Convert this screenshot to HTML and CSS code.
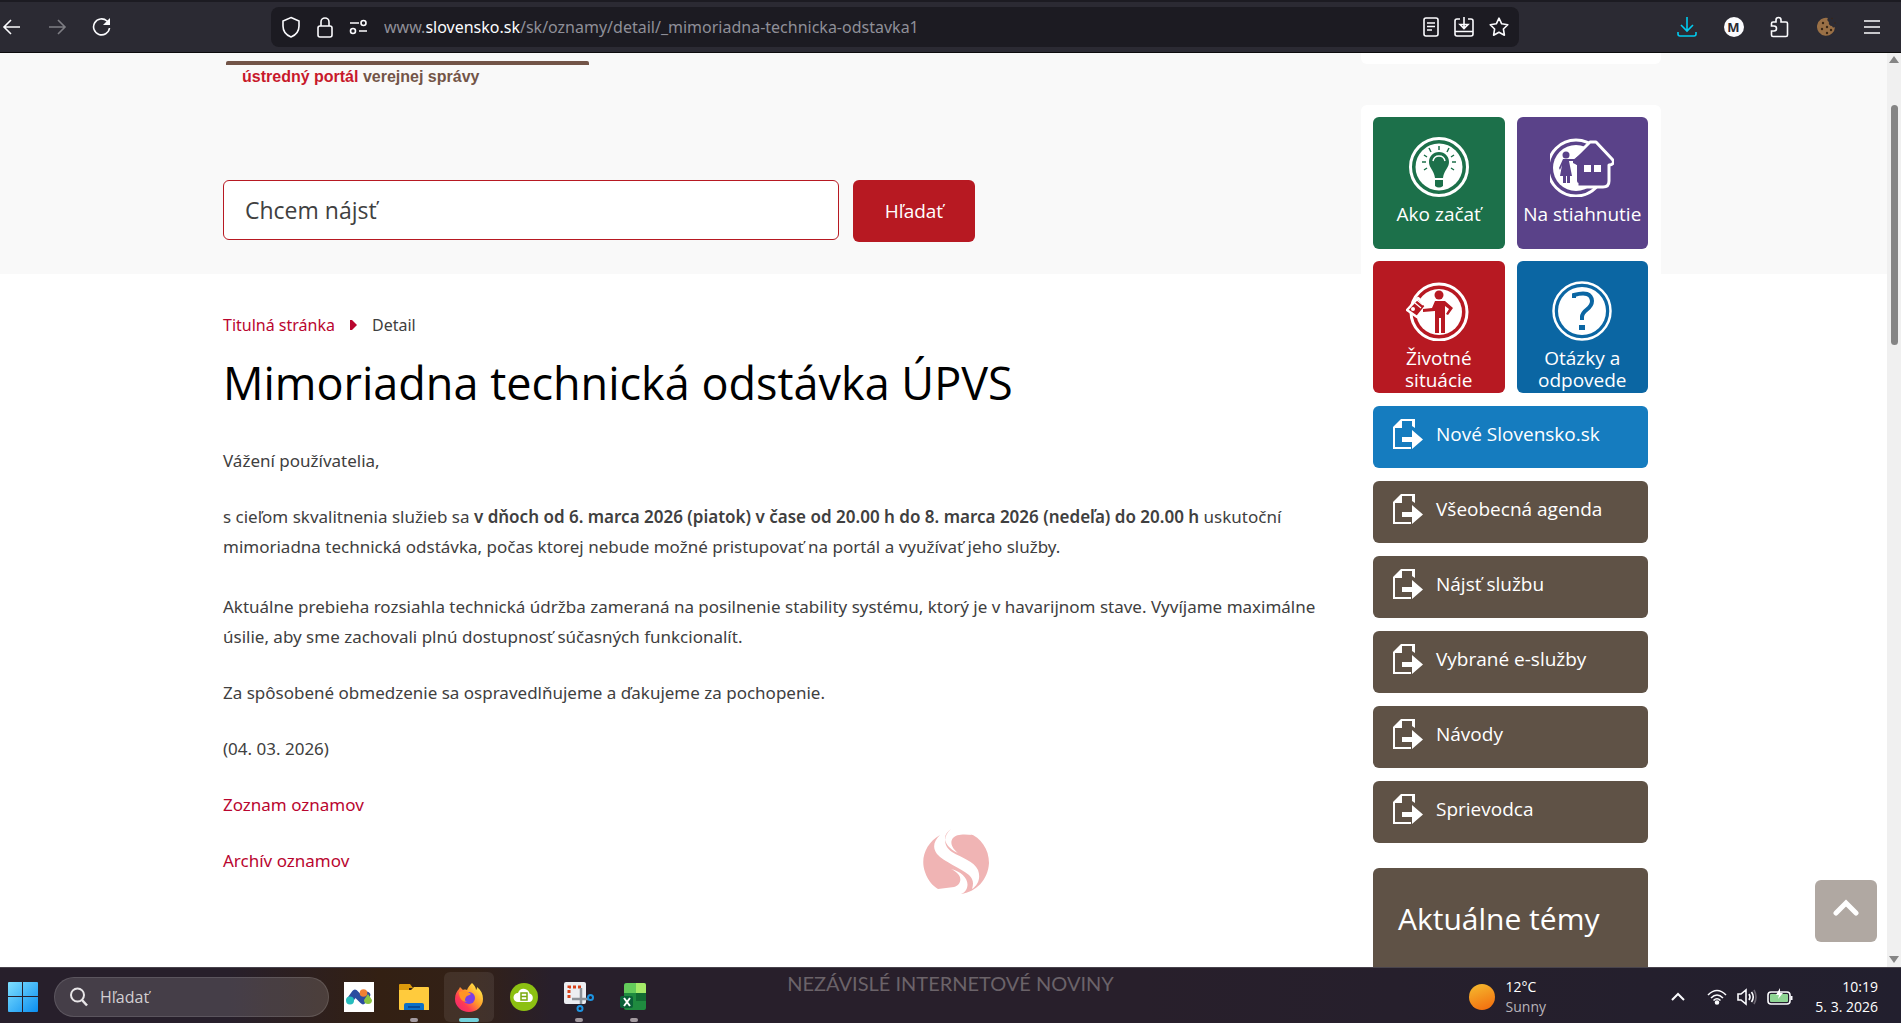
FILE: index.html
```
<!DOCTYPE html>
<html lang="sk">
<head>
    <meta charset="UTF-8">
    <meta name="viewport" content="width=device-width, initial-scale=1.0">
    <title>Mimoriadna technická odstávka ÚPVS</title>
    <link rel="stylesheet" href="styles.css">
</head>
<body>
    <!-- shared icon for the sidebar links -->
    <svg class="sprite" aria-hidden="true">
        <symbol id="doc" viewBox="0 0 30 30">
            <path d="M8 0h14v9l-3-2V2H9v7H2v19h16v2H0V8z" fill="#fff"/>
            <path d="M9 18h10v-7l11 9.500-11 9.500v-7H9z" fill="#fff"/>
        </symbol>
    </svg>

    <header class="toolbar">
        <nav class="nav-buttons">
            <button class="icon-btn" aria-label="Späť"><svg width="20" height="20" viewBox="0 0 20 20"><path d="M18 10H2M9 3l-7 7 7 7"/></svg></button>
            <button class="icon-btn dim" aria-label="Dopredu"><svg width="20" height="20" viewBox="0 0 20 20"><path d="M2 10h16M11 3l7 7-7 7"/></svg></button>
            <button class="icon-btn" aria-label="Obnoviť"><svg width="20" height="20" viewBox="0 0 20 20"><path d="M17.500 11A8 8 0 1 1 15 4l2 2"/><path d="M18 1v7h-7z" fill="#fbfbfe" stroke="none"/></svg></button>
        </nav>
        <div class="urlbar">
            <svg width="20" height="22" viewBox="0 0 20 22"><path d="M10 1.500l8 3.500v5c0 5-3 9-8 11-5-2-8-6-8-11V5z"/></svg>
            <svg width="18" height="22" viewBox="0 0 18 22"><rect x="2" y="10" width="14" height="11" rx="2"/><path d="M5 10V6a4 4 0 0 1 8 0v4"/></svg>
            <svg width="20" height="16" viewBox="0 0 20 16"><path d="M1 4h9M10 12h8"/><circle cx="14.500" cy="4" r="2.500"/><circle cx="4" cy="12" r="2.500"/></svg>
            <div class="url" role="textbox" contenteditable="true" spellcheck="false" aria-label="Adresa">www.<b>slovensko.sk</b>/sk/oznamy/detail/_mimoriadna-technicka-odstavka1</div>
            <button class="icon-btn" aria-label="Čítačka"><svg width="16" height="20" viewBox="0 0 16 20"><rect x="1" y="1" width="14" height="18" rx="2"/><path d="M4 6h8M4 9.500h8M4 13h5"/></svg></button>
            <button class="icon-btn" aria-label="Uložiť"><svg width="20" height="20" viewBox="0 0 20 20"><path d="M6 2H3a2 2 0 0 0-2 2v13a2 2 0 0 0 2 2h14a2 2 0 0 0 2-2V4a2 2 0 0 0-2-2h-3M1 14.500h18M10 0v11M6 7.500l4 4 4-4z"/></svg></button>
            <button class="icon-btn" aria-label="Záložka"><svg width="20" height="20" viewBox="0 0 20 20"><path d="M10 1.200l2.700 5.600 6.100.9-4.400 4.300 1 6.200-5.400-2.900-5.400 2.900 1-6.200L1.200 7.700l6.100-.9z" stroke-linejoin="round"/></svg></button>
        </div>
        <div class="tools">
            <button class="icon-btn cyan" aria-label="Stiahnuté"><svg width="20" height="20" viewBox="0 0 20 20"><path d="M10 0v13M4 8l6 6 6-6M1 15v2a2 2 0 0 0 2 2h14a2 2 0 0 0 2-2v-2"/></svg></button>
            <button class="avatar" aria-label="Profil">M</button>
            <button class="icon-btn" aria-label="Rozšírenia"><svg width="20" height="22" viewBox="0 0 20 22"><path d="M6 6V4a2.500 2.500 0 0 1 5 0v2h5q1.500 0 1.500 1.500V19q0 1.500-1.500 1.500H3q-1.500 0-1.500-1.500v-4H4a2 2 0 0 0 0-5H1.500V7.500Q1.500 6 3 6z"/></svg></button>
            <button class="icon-btn" aria-label="Cookies"><svg width="20" height="20" viewBox="0 0 20 20"><path d="M11 1a2.500 2.500 0 0 0 1 4 3 3 0 0 0 3 4 2 2 0 0 0 3 1A9 9 0 1 1 11 1z" fill="#9a7046" stroke="none"/><g fill="#3a2616" stroke="none"><circle cx="6" cy="6" r="1.200"/><circle cx="5" cy="12" r="1.200"/><circle cx="10" cy="10" r="1.200"/><circle cx="10" cy="16" r="1.200"/><circle cx="14" cy="13" r="1.200"/><circle cx="15" cy="1.500" r=".8"/><circle cx="18" cy="6" r=".8"/></g></svg></button>
            <button class="icon-btn" aria-label="Ponuka"><svg width="18" height="18" viewBox="0 0 18 18"><path d="M1 3h16M1 9h16M1 15h16"/></svg></button>
        </div>
    </header>

    <div class="page">
        <div class="site">
            <main class="main">
                <div class="masthead">
                    <div class="logo">
                        <p class="tagline"><span>ústredný portál</span> verejnej správy</p>
                    </div>
                    <form class="search">
                        <input type="text" class="search-input" placeholder="Chcem nájsť" aria-label="Chcem nájsť">
                        <button type="button" class="search-btn">Hľadať</button>
                    </form>
                </div>

                <nav class="breadcrumb">
                    <a href="#">Titulná stránka</a>
                    <svg width="7" height="10" viewBox="0 0 7 10"><path d="M0 0h2l5 5-5 5H0z" fill="#b9062f"/></svg>
                    <span>Detail</span>
                </nav>

                <article class="article">
                    <h1>Mimoriadna technická odstávka ÚPVS</h1>
                    <p>Vážení používatelia,</p>
                    <p>s cieľom skvalitnenia služieb sa <strong>v dňoch od 6. marca 2026 (piatok) v čase od 20.00 h do 8. marca 2026 (nedeľa) do 20.00 h</strong> uskutoční mimoriadna technická odstávka, počas ktorej nebude možné pristupovať na portál a využívať jeho služby.<br><br>Aktuálne prebieha rozsiahla technická údržba zameraná na posilnenie stability systému, ktorý je v havarijnom stave. Vyvíjame maximálne úsilie, aby sme zachovali plnú dostupnosť súčasných funkcionalít.</p>
                    <p>Za spôsobené obmedzenie sa ospravedlňujeme a ďakujeme za pochopenie.</p>
                    <p>(04. 03. 2026)</p>
                    <p><a href="#">Zoznam oznamov</a></p>
                    <p><a href="#">Archív oznamov</a></p>
                </article>
            </main>

            <aside class="sidebar">
                <div class="panel-end"></div>
                <div class="panel">
                    <div class="tiles">
                        <a href="#" class="tile green">
                            <svg width="60" height="60" viewBox="0 0 60 60">
                                <circle cx="30" cy="30" r="28.500" fill="none" stroke="#fff" stroke-width="3"/><circle cx="30" cy="30" r="23.500" fill="#fff"/>
                                <path d="M30 15c-6 0-10 4.500-10 10 0 6 5 8 6 16h8c1-8 6-10 6-16 0-5.500-4-10-10-10zM26 43h8v6q-4 3-8 0z" fill="#1c704a"/>
                                <path d="M24 24q1-5 6-5t6 5" fill="none" stroke="#fff" stroke-width="1.500"/>
                                <path d="M30 9v4M20 11l2 4M40 11l-2 4M15 18l3 2M45 18l-3 2M13 25h4M47 25h-4M15 33l3-2M45 33l-3-2" stroke="#1c704a" stroke-width="1.500"/>
                            </svg>
                            <span>Ako začať</span>
                        </a>
                        <a href="#" class="tile purple">
                            <svg width="64" height="60" viewBox="2 0 64 60">
                                <circle cx="28" cy="31" r="28" fill="none" stroke="#fff" stroke-width="3"/><circle cx="28" cy="31" r="23" fill="#fff"/>
                                <path d="M42 5h6l16 17c3 3 1 6-3 6v16q0 6-6 6H29V29h-6l1-6z" fill="#5a4289" stroke="#fff" stroke-width="3" stroke-linejoin="round"/>
                                <path d="M19 24l9-5v25l-4 4-5-3z" fill="#fff"/>
                                <path d="M25 23L44 8l17 17-3 3h-4v15q0 3-3 3H31q-2 0-2-2V28l-4-2z" fill="#5a4289"/>
                                <path d="M36 28h7v7h-7zM46 28h7v7h-7z" fill="#fff"/>
                                <circle cx="18" cy="18" r="3.500" fill="#5a4289"/><path d="M15 22h12v2h-6l3 15h-2v7h-3v-7h-1v7h-3v-7h-3l2-11-2 5-1-2z" fill="#5a4289"/>
                            </svg>
                            <span>Na stiahnutie</span>
                        </a>
                        <a href="#" class="tile red">
                            <svg width="66" height="60" viewBox="2 0 66 60">
                                <circle cx="35" cy="31" r="28" fill="none" stroke="#fff" stroke-width="3"/><circle cx="35" cy="31" r="23" fill="#fff"/>
                                <path d="M3 29L14 17l8 8-9 11z" fill="#b71922" stroke="#fff" stroke-width="2.500" stroke-linejoin="round"/>
                                <path d="M11 22l6 5M13 19l6 5" stroke="#fff" stroke-width="1.200"/><circle cx="9" cy="28" r="2" fill="#fff"/>
                                <circle cx="35" cy="14" r="4.500" fill="#b71922"/>
                                <path d="M31 20h10l8 7-5 7-2-1 3-5-4-3v27h-4V37h-2v15h-4V30l-12 1v-3l9-1z" fill="#b71922"/>
                            </svg>
                            <span>Životné situácie</span>
                        </a>
                        <a href="#" class="tile blue">
                            <svg width="60" height="60" viewBox="0 0 60 60">
                                <circle cx="30" cy="30" r="28.500" fill="none" stroke="#fff" stroke-width="2.500"/><circle cx="30" cy="30" r="24" fill="#fff"/>
                                <path d="M22 17v-3q17-5 18 6c0 9-10 8-10 16v3" fill="none" stroke="#0b66a3" stroke-width="4"/><path d="M27 44h6v5h-6z" fill="#0b66a3"/>
                            </svg>
                            <span>Otázky a odpovede</span>
                        </a>
                    </div>
                    <a href="#" class="side-link new"><svg width="30" height="30"><use href="#doc"/></svg>Nové Slovensko.sk</a>
                    <a href="#" class="side-link"><svg width="30" height="30"><use href="#doc"/></svg>Všeobecná agenda</a>
                    <a href="#" class="side-link"><svg width="30" height="30"><use href="#doc"/></svg>Nájsť službu</a>
                    <a href="#" class="side-link"><svg width="30" height="30"><use href="#doc"/></svg>Vybrané e-služby</a>
                    <a href="#" class="side-link"><svg width="30" height="30"><use href="#doc"/></svg>Návody</a>
                    <a href="#" class="side-link"><svg width="30" height="30"><use href="#doc"/></svg>Sprievodca</a>
                    <section class="topics"><h2>Aktuálne témy</h2></section>
                </div>
            </aside>
        </div>

        <div class="scrollbar">
            <svg width="10" height="7" viewBox="0 0 10 7"><path d="M5 0l5 7H0z" fill="#858585"/></svg>
            <div class="track"><div class="thumb"></div></div>
            <svg width="10" height="7" viewBox="0 0 10 7"><path d="M5 7l5-7H0z" fill="#858585"/></svg>
        </div>

        <button class="to-top" aria-label="Hore"><svg width="26" height="18" viewBox="0 0 26 18"><path d="M3 14L13 4l10 10" fill="none" stroke="#fff" stroke-width="5" stroke-linecap="round"/></svg></button>
    </div>

    <footer class="taskbar">
        <button class="start" aria-label="Štart"><svg width="30" height="30" viewBox="0 0 30 30"><defs><linearGradient id="win" x1="0" y1="0" x2="1" y2="1"><stop stop-color="#7fe0ff"/><stop offset="1" stop-color="#0a8ef0"/></linearGradient></defs><path d="M1 0h13v14H0V1q0-1 1-1zM15 0h14q1 0 1 1v13H15zM0 15h14v15H1q-1 0-1-1zM15 15h15v14q0 1-1 1H15z" fill="url(#win)"/></svg></button>
        <label class="task-search">
            <svg width="20" height="20" viewBox="0 0 20 20"><circle cx="8.500" cy="8" r="6.500" fill="none" stroke="#e8e6e8" stroke-width="2"/><path d="M13 13l5 5.500" stroke="#e8e6e8" stroke-width="2.500"/></svg>
            <input type="text" placeholder="Hľadať" aria-label="Hľadať">
        </label>
        <div class="apps">
            <button class="app" aria-label="Metropolis"><svg width="30" height="30" viewBox="0 0 30 30"><path d="M0 0h30v30H0z" fill="#fff"/><path d="M6 18l5-7 8 8 4-6" fill="none" stroke="#2c4ca0" stroke-width="6.500" stroke-linecap="round" stroke-linejoin="round"/><circle cx="6" cy="18.500" r="4" fill="#27bdbd"/><circle cx="19.500" cy="11" r="3.800" fill="#f08033"/><path d="M24 12l4 6a4 4 0 1 1-8 0z" fill="#8cc541"/></svg></button>
            <button class="app running" aria-label="Prieskumník"><svg width="30" height="30" viewBox="0 0 30 30"><path d="M0 3q0-1 1-1h10l3 4h-4v4H0z" fill="#dc9a0c"/><path d="M0 8h12l3-3h14q1 0 1 1v22H1q-1 0-1-1z" fill="#ffcb3d"/><path d="M5 28v-5q0-2 2-2h16q2 0 2 2v5z" fill="#0c70c7"/><path d="M9 25h12" stroke="#063f88" stroke-width="1.500"/></svg></button>
            <button class="app active" aria-label="Firefox"><svg width="30" height="30" viewBox="0 0 30 30"><defs><linearGradient id="fox" x1="1" y1="0" x2="0" y2="1"><stop offset=".1" stop-color="#fff04a"/><stop offset=".45" stop-color="#ff9a2a"/><stop offset=".7" stop-color="#ff3a54"/><stop offset="1" stop-color="#e8207a"/></linearGradient></defs><path d="M18 1c2 2 4 4 4 7 1-1 1-2 1-3 4 3 6 7 6 12A14 13 0 0 1 1 17C1 12 3 9 5 7l1-2 3 3c2-1 4 0 4 0 1-3 3-5 5-7z" fill="url(#fox)"/><circle cx="15" cy="16" r="6" fill="#7b3fe4"/><path d="M5 10q5-2 9 0l3 2c-2 2-4 1-5 3s-2 4 1 5c-5 0-8-4-8-10z" fill="#ff9424"/></svg></button>
            <button class="app" aria-label="Cloud"><svg width="30" height="30" viewBox="0 0 30 30"><circle cx="15" cy="15" r="14" fill="#8cc012"/><path d="M9 20a4.500 4.500 0 0 1 0-9q2-5 7-4 4 1 4.500 4.500A4.500 4.500 0 0 1 21 20z" fill="#fff"/><path d="M12 11h6v7h-6zM12 14.500h6" fill="none" stroke="#79a80c" stroke-width="1.500"/></svg></button>
            <button class="app running" aria-label="Výstrižky"><svg width="30" height="30" viewBox="0 0 30 30"><rect width="22" height="22" rx="2" fill="#eceef2"/><path d="M5 16V5h12" fill="none" stroke="#d8421a" stroke-width="3" stroke-dasharray="3 2"/><path d="M17 6v16M8 17h16" stroke="#8c9299" stroke-width="2.500"/><g fill="none" stroke="#1d94e2" stroke-width="2"><circle cx="26.500" cy="15.500" r="2.500"/><circle cx="16" cy="26.500" r="2.500"/></g></svg></button>
            <button class="app running" aria-label="Excel"><svg width="30" height="30" viewBox="0 0 30 30"><rect x="5" y="1" width="22" height="27" rx="2" fill="#1f8a3f"/><path d="M8 1h9v10H5V4q0-3 3-3z" fill="#64cb5b"/><path d="M17 1h8q2 0 2 2v8H17z" fill="#a5ea68"/><path d="M17 11h10v8H17z" fill="#126b32"/><rect x="1" y="14" width="13" height="12" rx="2" fill="#0b6038"/><path d="M5 16l6 8M11 16l-6 8" stroke="#fff" stroke-width="2"/></svg></button>
        </div>
        <button class="weather">
            <span class="sun"></span>
            <span class="two-lines"><span>12°C</span><span class="muted">Sunny</span></span>
        </button>
        <div class="tray">
            <button class="icon-btn" aria-label="Skryté ikony"><svg width="16" height="10" viewBox="0 0 16 10"><path d="M2 8l6-6 6 6" stroke-width="2"/></svg></button>
            <div class="status">
                <svg width="20" height="16" viewBox="0 0 20 16"><path d="M1 6q9-9 18 0M4 9q6-6 12 0M6.500 11.500q3.500-3.500 7 0"/><circle cx="10" cy="13.500" r="1.500" fill="#fff"/></svg>
                <svg width="20" height="18" viewBox="0 0 20 18"><path d="M1 6h3l5-4v14l-5-4H1zM12 6q2 3 0 6M14.500 4q3.500 5 0 10"/><path d="M17 2q4 7 0 14" stroke="#6b6570"/></svg>
                <svg width="26" height="18" viewBox="0 0 26 18"><rect x="1" y="4" width="22" height="12" rx="3"/><rect x="3" y="6" width="18" height="8" rx="1" fill="#8fd694" stroke="none"/><path d="M24.500 8v4" stroke-width="2"/><path d="M13 0l-4 7h3l-1 4 5-6h-3z" fill="#fff" stroke="none"/></svg>
            </div>
            <button class="clock two-lines"><span>10:19</span><span>5. 3. 2026</span></button>
        </div>
    </footer>

    <div class="watermark">
        <svg width="66" height="66" viewBox="0 0 66 66"><g fill="#f0b4b4">
            <path d="M28 0C21 6 19 16 29 23c10 6 22 9 26 18 3 8 0 15-6 19 2-6 1-10-3-14-8-7-25-13-32-21C9 18 11 12 17 6 3 14-3 29 2 43c3 9 8 14 13 17l16-2c7-2 8-9 4-13-2-2-4-4-7-5 12 3 20 12 15 21-1 2-3 3-5 4 15-2 27-14 28-31 0-14-8-25-20-30 2 1 3 2 4 2-9-1-17-1-20 3-4 5 0 11 5 15-9-4-13-10-13-15 0-3 2-6 6-9z"/>
        </g></svg>
        <span>NEZÁVISLÉ INTERNETOVÉ NOVINY</span>
    </div>
</body>
</html>
```
FILE: styles.css
```
:root {
    --red: #b71922;
    --link: #b9062f;
    --brown: #5f5246;
    --text: #404040;
}

* {
    box-sizing: border-box;
}

body, html {
    margin: 0;
    padding: 0;
    height: 100vh;
    overflow: hidden;
    font-family: 'Open Sans', 'Noto Sans', sans-serif;
    color: var(--text);
}

body {
    position: relative;
    display: flex;
    flex-direction: column;
}

a {
    color: var(--link);
    text-decoration: none;
}

button {
    font-family: inherit;
    border: none;
    padding: 0;
    background: none;
    color: inherit;
    cursor: pointer;
}

svg {
    display: block;
    flex-shrink: 0;
}

.sprite {
    position: absolute;
    width: 0;
    height: 0;
}

/* Browser toolbar */
.toolbar {
    display: flex;
    align-items: center;
    height: 53px;
    flex-shrink: 0;
    padding: 0 20px 0 2px;
    background: #2b2a33;
    border-top: 2px solid #1c1b22;
    border-bottom: 1px solid #0c0c0d;
}

.toolbar svg, .tray svg {
    fill: none;
    stroke: #fbfbfe;
    stroke-width: 1.6px;
}

.nav-buttons {
    display: flex;
    gap: 25px;
    width: 269px;
}

.icon-btn.dim {
    opacity: 0.4;
}

.toolbar .cyan svg {
    stroke: #00ccf0;
}

.urlbar {
    display: flex;
    align-items: center;
    gap: 15px;
    flex: 1;
    height: 40px;
    padding: 0 10px;
    border-radius: 8px;
    background: #1c1b22;
}

.url {
    flex: 1;
    font-family: 'Noto Sans', sans-serif;
    font-size: 16px;
    color: #8f8f98;
    white-space: nowrap;
    overflow: hidden;
}

.url b {
    font-weight: 400;
    color: #fbfbfe;
}

.tools {
    display: flex;
    align-items: center;
    justify-content: space-between;
    width: 204px;
    margin-left: 158px;
}

.avatar {
    width: 20px;
    height: 20px;
    border-radius: 50%;
    background: #fbfbfe;
    color: #2b2a33;
    font-size: 13px;
    font-weight: 700;
    line-height: 20px;
}

/* Page */
.page {
    position: relative;
    display: flex;
    flex: 1;
    min-height: 0;
}

.site {
    display: grid;
    grid-template-columns: 1fr 300px;
    gap: 12px;
    flex: 1;
    align-items: start;
    padding: 0 226px 0 223px;
    overflow: hidden;
    background: linear-gradient(#f9f9f9 221px, #fff 221px);
}

.masthead {
    height: 221px;
    padding-top: 8px;
}

.logo {
    width: 363px;
    margin-left: 3px;
    border-top: 4px solid #735548;
    border-radius: 2px;
}

.tagline {
    margin: 0;
    padding: 2px 0 0 16px;
    font-family: 'Liberation Sans', sans-serif;
    font-size: 16px;
    font-weight: 700;
    line-height: 20px;
    color: #735548;
}

.tagline span {
    color: #c8192b;
}

.search {
    display: flex;
    align-items: flex-start;
    gap: 14px;
    margin-top: 93px;
}

.search-input {
    width: 616px;
    height: 60px;
    padding: 0 21px;
    border: 1px solid var(--red);
    border-radius: 6px;
    background: #fff;
    font-family: inherit;
    font-size: 23px;
    color: var(--text);
}

.search-input::placeholder {
    color: var(--text);
}

.search-btn {
    width: 122px;
    height: 62px;
    border-radius: 6px;
    background: var(--red);
    color: #fff;
    font-size: 19px;
}

.breadcrumb {
    display: flex;
    align-items: center;
    gap: 15px;
    margin-top: 38px;
    font-family: 'Noto Sans', sans-serif;
    font-size: 16px;
    line-height: 26px;
}

.article h1 {
    margin: 15px 0 33px;
    font-size: 45px;
    font-weight: 400;
    line-height: 60px;
    color: #000;
}

.article p {
    margin: 0 0 26px;
    font-family: 'Noto Sans', sans-serif;
    font-size: 17px;
    line-height: 30px;
}

.article strong {
    font-weight: 600;
}

/* Sidebar */
.panel-end {
    height: 11px;
    margin-bottom: 41px;
    border-radius: 0 0 6px 6px;
    background: #fff;
}

.panel {
    display: flex;
    flex-direction: column;
    gap: 13px;
    padding: 12px 13px 0 12px;
    border-radius: 6px 6px 0 0;
    background: #fff;
}

.tiles {
    display: grid;
    grid-template-columns: 1fr 1fr;
    gap: 12px;
}

.tile {
    display: flex;
    flex-direction: column;
    align-items: center;
    height: 132px;
    padding-top: 20px;
    border-radius: 6px;
    overflow: hidden;
    color: #fff;
    font-size: 19px;
    line-height: 22px;
    text-align: center;
}

.tile span {
    margin-top: 6px;
    padding: 0 6px;
}

.green { background: #1c704a; }
.purple { background: #5a4289; }
.red { background: var(--red); }
.blue { background: #0b66a3; }

.side-link {
    display: flex;
    align-items: center;
    gap: 13px;
    height: 62px;
    padding: 0 20px 6px;
    border-radius: 6px;
    background: var(--brown);
    color: #fff;
    font-size: 19px;
}

.side-link.new {
    background: #157cbf;
}

.topics {
    height: 200px;
    margin-top: 12px;
    padding: 30px 25px;
    border-radius: 6px;
    background: var(--brown);
}

.topics h2 {
    margin: 0;
    color: #fff;
    font-size: 30px;
    font-weight: 400;
    line-height: 42px;
}

.scrollbar {
    display: flex;
    flex-direction: column;
    align-items: center;
    width: 14px;
    padding: 3px 0 4px;
    background: #f0f0f0;
}

.track {
    flex: 1;
    padding-top: 42px;
}

.thumb {
    width: 7px;
    height: 240px;
    border-radius: 4px;
    background: #858585;
}

.to-top {
    position: absolute;
    right: 24px;
    bottom: 25px;
    display: flex;
    justify-content: center;
    width: 62px;
    height: 62px;
    padding-top: 19px;
    border-radius: 6px;
    background: #b0a8a2;
}

/* Taskbar */
.taskbar {
    display: flex;
    align-items: center;
    height: 56px;
    flex-shrink: 0;
    padding: 2px 23px 0 8px;
    border-top: 1px solid #48434c;
    background: linear-gradient(90deg, #271f2b 0, #271f2b 12%, #332013 20%, #332117 25%, #281f2b 29%, #281f2b 60%, #221f2e 100%);
    color: #fff;
    font-size: 15px;
}

.task-search {
    display: flex;
    align-items: center;
    gap: 11px;
    width: 275px;
    height: 40px;
    margin: 0 5px 0 16px;
    padding: 0 14px;
    border: 1px solid rgba(255, 255, 255, 0.12);
    border-radius: 20px;
    background: rgba(255, 255, 255, 0.14);
}

.task-search input {
    flex: 1;
    min-width: 0;
    padding: 0;
    border: none;
    outline: none;
    background: none;
    font-family: inherit;
    font-size: 16px;
    color: #fff;
}

.task-search input::placeholder {
    color: #d2cfd2;
}

.apps {
    display: flex;
    gap: 5px;
}

.app {
    position: relative;
    display: flex;
    align-items: center;
    justify-content: center;
    width: 50px;
    height: 50px;
    border-radius: 6px;
}

.app.active {
    background: rgba(255, 255, 255, 0.08);
}

.app.running::after, .app.active::after {
    content: '';
    position: absolute;
    bottom: 0;
    width: 8px;
    height: 4px;
    border-radius: 2px;
    background: #a39aa0;
}

.app.active::after {
    width: 20px;
    background: #73d2dc;
}

.weather {
    display: flex;
    align-items: center;
    gap: 11px;
    margin-left: auto;
    text-align: left;
}

.sun {
    width: 26px;
    height: 26px;
    border-radius: 50%;
    background: linear-gradient(160deg, #f5bd30, #f2680c);
}

.two-lines {
    display: flex;
    flex-direction: column;
    font-size: 14px;
    line-height: 20px;
}

.muted {
    color: #b9b4bb;
}

.tray {
    display: flex;
    align-items: center;
    width: 208px;
    margin-left: 124px;
}

.status {
    display: flex;
    align-items: center;
    gap: 10px;
    margin-left: 21px;
}

.clock {
    align-items: flex-end;
    margin-left: auto;
}

/* Sits over both the page and the taskbar */
.watermark {
    position: absolute;
    left: 50%;
    bottom: 25px;
    display: flex;
    flex-direction: column;
    align-items: center;
    gap: 73px;
    width: 360px;
    margin-left: -180px;
    pointer-events: none;
    font-family: 'Lato', sans-serif;
    font-size: 20px;
    line-height: 30px;
    color: #6b6369;
    white-space: nowrap;
}

.watermark svg {
    margin-left: 10px;
}
```
